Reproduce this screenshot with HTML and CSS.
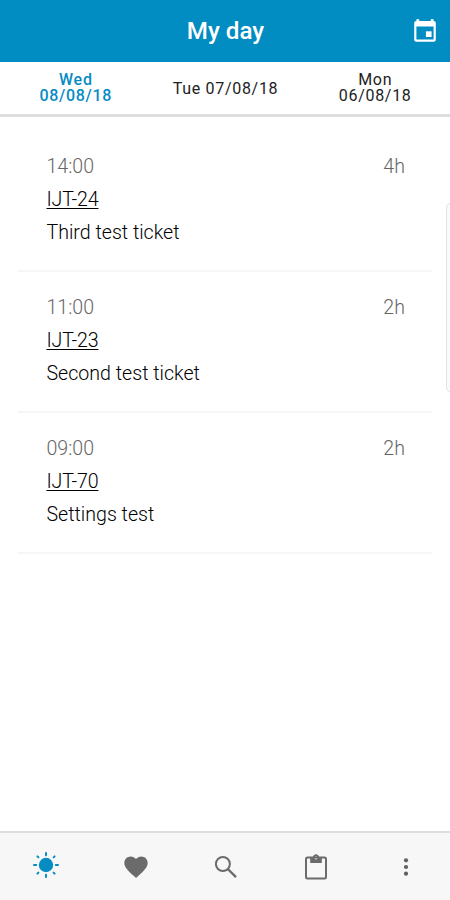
FILE: index.html
```html
<!DOCTYPE html>
<html lang="en">
<head>
<meta charset="utf-8">
<title>My day</title>
<link rel="stylesheet" href="styles.css">
</head>
<body>
<div class="app">
  <header class="bar">
    <h1 class="title">My day</h1>
    <svg class="calendar" width="24" height="24" viewBox="0 0 24 24"><path fill="#fff" fill-rule="evenodd" d="M3.400.3h2.800v1.700h11.600V.3h2.800v1.700c1.400 0 2.200.8 2.200 2.100v16.500c0 1.400-.8 2.200-2.200 2.200H3.400c-1.400 0-2.200-.8-2.200-2.200V4.100c0-1.300.8-2.100 2.200-2.100zM3.400 7.500v13.100h17.200V7.500z"/><path fill="#fff" d="M12.900 12.300h5.700V18h-5.700z"/></svg>
  </header>
  <nav class="days">
    <a class="day two-line active"><span>Wed</span><span>08/08/18</span></a>
    <a class="day"><span>Tue 07/08/18</span></a>
    <a class="day two-line"><span>Mon</span><span>06/08/18</span></a>
  </nav>
  <main class="list">
    <article class="entry">
      <div class="row"><span>14:00</span><span>4h</span></div>
      <a class="key">IJT-24</a>
      <p class="summary">Third test ticket</p>
    </article>
    <article class="entry">
      <div class="row"><span>11:00</span><span>2h</span></div>
      <a class="key">IJT-23</a>
      <p class="summary">Second test ticket</p>
    </article>
    <article class="entry">
      <div class="row"><span>09:00</span><span>2h</span></div>
      <a class="key">IJT-70</a>
      <p class="summary">Settings test</p>
    </article>
  </main>
  <div class="edge-handle"></div>
  <footer class="tabs">
    <a class="tab"><svg class="sun" width="28" height="28" viewBox="0 0 28 28"><circle cx="14" cy="14" r="7.200" fill="#078bc3"/><path stroke="#078bc3" stroke-width="2" stroke-linecap="round" d="M14 2v2.200M14 23.800V26M2 14h2.200M23.800 14H26M5.400 5.400l1 1M21.600 21.600l1 1M5.400 22.600l1-1M21.600 6.400l1-1"/></svg></a>
    <a class="tab"><svg width="28" height="28" viewBox="0 0 24 24"><path fill="#6b6b6b" d="M12 21.350l-1.450-1.320C5.400 15.360 2 12.280 2 8.500 2 5.420 4.420 3 7.500 3c1.740 0 3.410.81 4.500 2.090C13.090 3.810 14.760 3 16.500 3 19.580 3 22 5.420 22 8.500c0 3.780-3.400 6.860-8.550 11.540z"/></svg></a>
    <a class="tab"><svg width="28" height="28" viewBox="0 0 28 28"><g fill="none" stroke="#6b6b6b" stroke-width="2"><circle cx="10.900" cy="11" r="7"/><path stroke-width="2.400" d="M15.800 16l8.200 8.200"/></g></svg></a>
    <a class="tab"><svg width="28" height="28" viewBox="0 0 28 28"><rect x="4" y="4.500" width="20" height="21" rx="1.500" fill="none" stroke="#6b6b6b" stroke-width="2"/><path fill="#6b6b6b" fill-rule="evenodd" d="M8.200 10V4.800h2.600C10.900 2.500 12.300 1.300 14 1.300s3.100 1.200 3.200 3.500h2.600V10zM14 3.200a1.600 1.600 0 1 0 0 3.200 1.600 1.600 0 0 0 0-3.200z"/></svg></a>
    <a class="tab"><svg width="28" height="28" viewBox="0 0 28 28"><g fill="#606060"><circle cx="14" cy="7.300" r="2.100"/><circle cx="14" cy="14" r="2.100"/><circle cx="14" cy="20.700" r="2.100"/></g></svg></a>
  </footer>
</div>
</body>
</html>
```
FILE: styles.css
```css
* { box-sizing: border-box; }
body { margin: 0; font-family: Roboto, "Liberation Sans", sans-serif; background: #fff; }
.app { position: relative; height: 900px; display: flex; flex-direction: column; overflow: hidden; }
.bar { height: 62px; background: #018cc2; display: grid; grid-template-columns: 1fr auto 1fr; align-items: center; padding-right: 13px; }
.title { grid-column: 2; margin: 0 0 0 14px; font-size: 24.2px; line-height: 28px; font-weight: 500; color: #fff; }
.calendar { justify-self: end; }
.days { height: 55px; display: grid; grid-template-columns: repeat(3, 1fr); align-items: center; padding: 1px 0 0 1px; border-bottom: 3px solid #dedede; }
.day { display: flex; flex-direction: column; align-items: center; font-size: 16px; line-height: 16px; letter-spacing: .7px; color: #222; }
.day.two-line { padding-bottom: 2px; }
.day.active { color: #078bc3; font-weight: 500; }
.list { flex: 1; padding: 14px 18px 0; }
.entry { height: 141px; padding: 19px 27px 0 28.500px; border-bottom: 2px solid #f6f6f6; font-size: 19.6px; font-weight: 300; line-height: 33px; color: #000; }
.row { display: flex; justify-content: space-between; color: #666; }
.key { display: block; width: max-content; letter-spacing: -.15px; text-decoration: underline; text-decoration-thickness: 1px; text-underline-offset: 2px; }
.summary { margin: 0; }
.edge-handle { position: absolute; left: 446px; top: 202px; width: 12px; height: 191px; border: 1px solid #e2e2e2; border-radius: 6px; background: #fafafa; }
.tabs { height: 69px; display: grid; grid-template-columns: repeat(5, 1fr); background: #f7f7f7; border-top: 2px solid #dedede; }
.tab { display: flex; justify-content: center; padding: 20px 0 0 1px; }
.sun { margin-top: -2px; }
```
